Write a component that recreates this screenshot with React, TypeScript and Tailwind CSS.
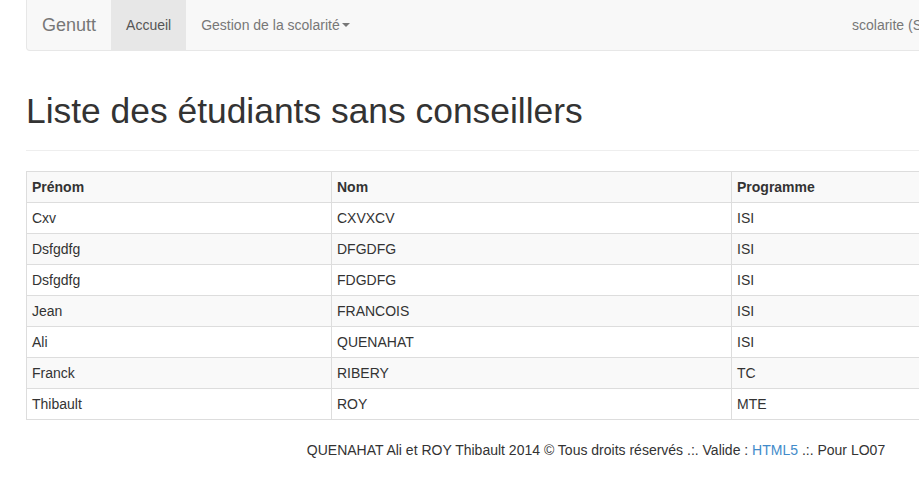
import React from "react";

const rows = [
  ["Cxv", "CXVXCV", "ISI"],
  ["Dsfgdfg", "DFGDFG", "ISI"],
  ["Dsfgdfg", "FDGDFG", "ISI"],
  ["Jean", "FRANCOIS", "ISI"],
  ["Ali", "QUENAHAT", "ISI"],
  ["Franck", "RIBERY", "TC"],
  ["Thibault", "ROY", "MTE"],
];

export default function App() {
  return (
    <div
      className="w-[919px] h-[495px] overflow-hidden bg-white text-[14px] leading-[20px] text-[#333]"
      style={{ fontFamily: '"Liberation Sans", Arial, Helvetica, sans-serif' }}
    >
      <div className="ml-[26px] w-[1140px]">
        {/* Navbar */}
        <nav className="flex h-[51px] items-stretch rounded-b-[4px] border-x border-b border-[#e7e7e7] bg-[#f8f8f8]">
          <div className="flex items-center px-[15px] text-[18px] text-[#777]">Genutt</div>
          <div className="flex items-center bg-[#e7e7e7] px-[15px] text-[#555]">Accueil</div>
          <div className="flex items-center px-[15px] text-[#777]">
            Gestion de la scolarité
            <span className="ml-[2px] inline-block h-0 w-0 border-x-[4px] border-t-[4px] border-x-transparent border-t-[#777]" />
          </div>
          <div className="ml-auto flex w-[313px] items-center text-[#777]">scolarite (Scolarité)</div>
        </nav>

        {/* Page header */}
        <div className="mt-[40px] border-b border-[#eee] pb-[19px]">
          <h1 className="text-[35.4px] leading-[40px] font-normal text-[#333]">Liste des étudiants sans conseillers</h1>
        </div>

        {/* Table */}
        <table className="mt-[20px] w-[1140px] border-collapse border border-[#ddd]">
          <tbody>
            <tr className="bg-[#f9f9f9]">
              <th className="w-[305px] border border-[#ddd] px-[5px] py-[5px] text-left font-bold">Prénom</th>
              <th className="w-[400px] border border-[#ddd] px-[5px] py-[5px] text-left font-bold">Nom</th>
              <th className="border border-[#ddd] px-[5px] py-[5px] text-left font-bold">Programme</th>
            </tr>
            {rows.map((r, i) => (
              <tr key={i} className={i % 2 === 1 ? "bg-[#f9f9f9]" : "bg-white"}>
                <td className="border border-[#ddd] px-[5px] py-[5px]">{r[0]}</td>
                <td className="border border-[#ddd] px-[5px] py-[5px]">{r[1]}</td>
                <td className="border border-[#ddd] px-[5px] py-[5px]">{r[2]}</td>
              </tr>
            ))}
          </tbody>
        </table>

        {/* Footer */}
        <footer className="mt-[20px] text-center">
          QUENAHAT Ali et ROY Thibault 2014 © Tous droits réservés .:. Valide :{" "}
          <span className="text-[#428bca]">HTML5</span> .:. Pour LO07
        </footer>
      </div>
    </div>
  );
}
